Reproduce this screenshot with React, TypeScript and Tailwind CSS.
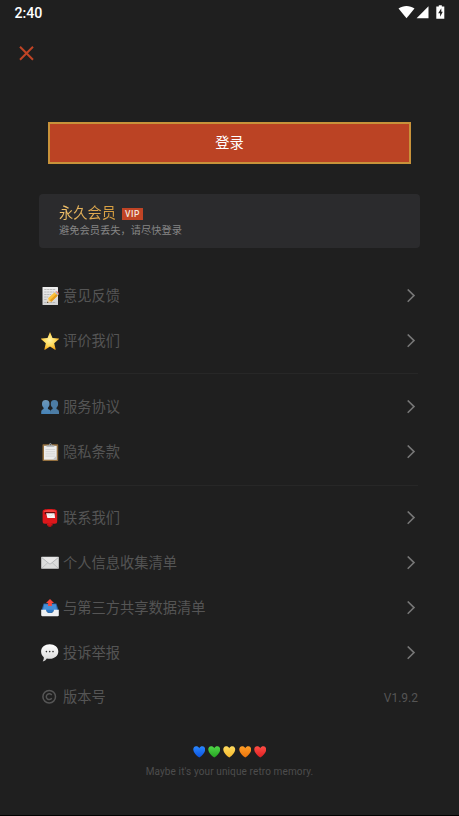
import type { ReactNode } from "react";

const MemoIcon = () => (
  <svg className="w-[18px] h-[18px]" viewBox="0 0 18 18">
    <defs>
      <linearGradient id="paper" x1="0" y1="0" x2="0" y2="1">
        <stop offset="0" stopColor="#efefef" />
        <stop offset="1" stopColor="#d2d2d2" />
      </linearGradient>
    </defs>
    <rect x="1.5" y="0" width="15.5" height="18" rx="0.5" fill="url(#paper)" />
    <path
      d="M3.2 2.5h11M3.2 5h10M3.2 7.5h7M3.2 10h4M3.2 12.5h2.500M3.200 15.500h11"
      stroke="#a8a8a8"
      strokeWidth="0.7"
      strokeDasharray="2.4 0.5"
    />
    <path d="M6 16l1.100-4.700 3.400 3.400z" fill="#f2d3a0" />
    <path d="M7.100 11.300L13.600 5.300l3.200 3.200-6.300 6.200-2.200-.9z" fill="#fbc13a" />
    <path d="M8.900 13.200l6.600-6.300 1.300 1.600-6.300 6.200z" fill="#e39a1c" />
    <path d="M13.600 5.300l1-.9 3.100 3.100-.9 1z" fill="#b9bfc4" />
    <path d="M14.600 4.400c1.300-1 4.100 1.500 3.100 3.100z" fill="#ea7770" />
    <path d="M6 16l.4-1.500 1.100 1.100z" fill="#3b3024" />
  </svg>
);

const StarIcon = () => (
  <svg className="w-[18px] h-[18px]" viewBox="0 0 18 18">
    <defs>
      <radialGradient id="star" cx="0.48" cy="0.45" r="0.55">
        <stop offset="0" stopColor="#fff3a8" />
        <stop offset="0.55" stopColor="#ffdb5c" />
        <stop offset="1" stopColor="#f6a81c" />
      </radialGradient>
    </defs>
    <path
      d="M9 0l2.500 5.900 6.100.5c.5.100.6.500.2.800l-4.600 4.100 1.400 6c.1.400-.2.600-.6.400L9 14.500l-5 3.200c-.4.200-.7 0-.6-.4l1.400-6L.2 7.200c-.4-.3-.3-.7.200-.8l6.100-.5z"
      fill="url(#star)"
    />
  </svg>
);

const PeopleIcon = () => (
  <svg className="w-[18px] h-[18px]" viewBox="0 0 18 18">
    <defs>
      <linearGradient id="people" x1="0" y1="0" x2="0" y2="1">
        <stop offset="0" stopColor="#6d97b8" />
        <stop offset="1" stopColor="#4683b8" />
      </linearGradient>
    </defs>
    <path
      d="M13.400 2c2.600 0 4 1.600 3.700 4.200-.1 1.700-.8 2.700-1.600 3.500v1.300c1.700.6 2.500 1.300 2.500 3V16H9.200v-2c0-1.700 1-2.400 2.400-3V9.700C10.500 8.900 9.900 7.900 9.800 6.200 9.600 3.600 10.900 2 13.400 2z"
      fill="#4c7ca4"
    />
    <path
      d="M4.700 2c2.600 0 4 1.600 3.800 4.200-.1 1.700-.7 2.700-1.600 3.500V11c1.700.6 2.700 1.300 2.700 3v2H.2v-2c0-1.700 1-2.400 2.400-3V9.700C1.700 8.900 1.100 7.900 1 6.200.8 3.600 2.200 2 4.700 2z"
      fill="url(#people)"
    />
  </svg>
);

const ClipboardIcon = () => (
  <svg className="w-[18px] h-[18px]" viewBox="0 0 18 18">
    <rect x="1.500" y="1.300" width="15.700" height="16.700" rx="0.800" fill="#94703f" />
    <rect x="3" y="2.800" width="12.700" height="13.900" fill="#ececec" />
    <path d="M4.500 6.500h9.600M4.500 8.700h9.600M4.500 10.900h9.600M4.500 13.100h9.600" stroke="#cfcfcf" strokeWidth="0.800" />
    <path d="M5.500 3.800V2.200h2.600C8.200.8 8.600.2 9.400.2s1.200.6 1.300 2h2.600v1.600z" fill="#a6aaad" />
    <circle cx="9.400" cy="1.600" r="0.600" fill="#444" />
    <path d="M11.500 16.700l4.200-3.900v3.900z" fill="#c4c4c4" />
  </svg>
);

const PostboxIcon = () => (
  <svg className="w-[18px] h-[18px]" viewBox="0 0 18 18">
    <rect x="7.300" y="13.500" width="3" height="4.400" fill="#b50f12" />
    <path d="M6 15.100h5.600v1.400H6z" fill="#d81519" />
    <path d="M1.600 3C1.600.7 3.100 0 8.900 0s7.300.7 7.300 3v9.300c0 1.700-.7 2.500-2.400 2.500H4c-1.700 0-2.400-.8-2.400-2.500z" fill="#dc171b" />
    <path d="M2.800 2.900c0-1.600 1.300-2 6.100-2s6.100.4 6.100 2z" fill="#f2403d" />
    <path d="M3.800 3.100h10.200v2.200H3.800z" fill="#5a0809" />
    <path d="M5.200 4.200h8.300l.6 4.900H6.400z" fill="#f6f4f4" />
    <path d="M5.400 4.400l4.300 2.700 3.700-2.700" fill="none" stroke="#ccc" strokeWidth="0.500" />
  </svg>
);

const EnvelopeIcon = () => (
  <svg className="w-[18px] h-[18px]" viewBox="0 0 18 18">
    <rect x="0.200" y="2.800" width="17.600" height="12" rx="0.800" fill="#dcdddd" />
    <path d="M.6 14.400l6.500-6M17.400 14.400l-6.500-6" stroke="#b4b6b8" strokeWidth="0.700" />
    <path d="M.4 3.300L8 9.500c.7.5 1.300.5 2 0l7.600-6.200" fill="#e9e9e9" stroke="#a9acae" strokeWidth="0.800" />
  </svg>
);

const OutboxIcon = () => (
  <svg className="w-[18px] h-[18px]" viewBox="0 0 18 18">
    <path d="M2.600 4.500h12.800l2.300 7.200H.3z" fill="#2764a6" />
    <path d="M3.200 5.200h11.600l1.500 6.500H1.700z" fill="#458fd8" />
    <path d="M.2 10.800h4.900c.5 2.200 1.600 3.200 3.900 3.200s3.400-1 3.900-3.200h4.900V16c0 .8-.3 1.200-1.100 1.200H1.300c-.8 0-1.100-.4-1.100-1.200z" fill="#eef0f2" />
    <path d="M5.100 10.800h7.800c-.5 2.200-1.600 3.200-3.900 3.200s-3.400-1-3.900-3.200z" fill="#2d77c4" />
    <path d="M9 0l4 3.900h-2.100v3H7.100v-3H5z" fill="#f5493f" />
  </svg>
);

const SpeechIcon = () => (
  <svg className="w-[18px] h-[18px]" viewBox="0 0 18 18">
    <defs>
      <linearGradient id="speech" x1="0" y1="0" x2="0" y2="1">
        <stop offset="0" stopColor="#ffffff" />
        <stop offset="1" stopColor="#d8d8d8" />
      </linearGradient>
    </defs>
    <path
      d="M8.700.3c4.900 0 8.600 2.900 8.600 7.200s-3.700 7.300-8.600 7.300c-1 0-2-.1-2.900-.4-.9 1.400-2.100 2.700-4.100 3 .8-1.100 1.200-2.500 1.100-4.200C1.100 11.800.1 9.800.1 7.500.1 3.200 3.800.3 8.700.3z"
      fill="url(#speech)"
    />
    <circle cx="5.400" cy="7.600" r="0.800" fill="#333" />
    <circle cx="8.700" cy="7.600" r="0.800" fill="#333" />
    <circle cx="12" cy="7.600" r="0.800" fill="#333" />
  </svg>
);

const CopyrightIcon = () => (
  <svg className="w-[18px] h-[18px]" viewBox="0 0 18 18" fill="none" stroke="#555">
    <circle cx="8.200" cy="8.700" r="6.300" strokeWidth="1.500" />
    <path d="M10.700 7.200a2.900 2.900 0 1 0 0 3" strokeWidth="1.500" />
  </svg>
);

const Chevron = () => (
  <svg className="w-[10px] h-[14px] mr-[2px]" viewBox="0 0 10 14" fill="none" stroke="#777" strokeWidth="1.600">
    <path d="M1.700 0.500L8 6.600l-6.300 6.100" />
  </svg>
);

const Heart = ({ id, light, dark }: { id: string; light: string; dark: string }) => (
  <svg className="w-[12.500px] h-[12px]" viewBox="0 0 12.5 12">
    <defs>
      <linearGradient id={id} x1="0" y1="0" x2="0" y2="1">
        <stop offset="0" stopColor={light} />
        <stop offset="1" stopColor={dark} />
      </linearGradient>
    </defs>
    <path
      d="M6.250 2.300C7 .7 8.300.2 9.500.3c1.800.2 2.900 1.600 2.700 3.600-.3 2.800-3 5.500-5.950 7.700C3.300 9.400.6 6.700.3 3.900.1 1.900 1.200.5 3 .3c1.200-.1 2.500.4 3.250 2z"
      fill={`url(#${id})`}
    />
  </svg>
);

const hearts = [
  { id: "blue", light: "#2a87ff", dark: "#0b52e0" },
  { id: "green", light: "#4fd747", dark: "#25a322" },
  { id: "yellow", light: "#ffdc60", dark: "#f6b72b" },
  { id: "orange", light: "#ff9d26", dark: "#e9720c" },
  { id: "red", light: "#ff4d45", dark: "#de1f22" },
];

type Item = { icon: ReactNode; label: string };

const groups: Item[][] = [
  [
    { icon: <MemoIcon />, label: "意见反馈" },
    { icon: <StarIcon />, label: "评价我们" },
  ],
  [
    { icon: <PeopleIcon />, label: "服务协议" },
    { icon: <ClipboardIcon />, label: "隐私条款" },
  ],
  [
    { icon: <PostboxIcon />, label: "联系我们" },
    { icon: <EnvelopeIcon />, label: "个人信息收集清单" },
    { icon: <OutboxIcon />, label: "与第三方共享数据清单" },
    { icon: <SpeechIcon />, label: "投诉举报" },
  ],
];

const Row = ({ icon, label, children }: Item & { children: ReactNode }) => (
  <div className="flex items-center h-[44.800px] pl-[1px]">
    {icon}
    <span className="ml-1 flex-1 text-[14.250px] leading-5 text-[#555]">{label}</span>
    {children}
  </div>
);

const StatusBar = () => (
  <div className="flex items-center justify-between h-[26px] pl-[14.500px] pr-[14.500px]">
    <span className="pt-px text-[14.200px] font-medium text-white">2:40</span>
    <div className="flex items-center h-[14px] -mt-[2px]">
      <svg className="w-[17px] h-[14px]" viewBox="0 0 17 14" fill="#fff">
        <path d="M.5 3.500C5 .1 12 .1 16.500 3.500L8.500 13.200z" />
      </svg>
      <svg className="w-[13px] h-[14px] ml-[1px]" viewBox="0 0 13 14" fill="#fff">
        <path d="M12.500 1.300v11.900H.6z" />
      </svg>
      <svg className="w-[9px] h-[14px] ml-[7px]" viewBox="0 0 9 14">
        <path d="M2.800.2h3v1.400h2.500v12.100H.3V1.600h2.500z" fill="#fff" />
        <path d="M5.300 3.300L2.200 8.200h1.900v3.500l2.700-4.900H5.300z" fill="#1f1f1f" />
      </svg>
    </div>
  </div>
);

const App = () => {
  return (
    <div className="flex flex-col w-[459px] h-[816px] overflow-hidden bg-[#1f1f1f] border-b border-black font-[Roboto,'Noto_Sans_CJK_SC',sans-serif]">
      <StatusBar />

      <button className="mt-5 ml-[19px] w-[15px] h-[15px]" aria-label="关闭">
        <svg className="w-[15px] h-[15px]" viewBox="0 0 15 15" stroke="#c04425" strokeWidth="2">
          <path d="M1 .7l13 13M14 .7L1 13.700" />
        </svg>
      </button>

      <button className="mt-[61px] mx-[48px] h-[42px] border-2 border-[#c8923a] bg-[#bb4324] pb-px text-[14.250px] leading-5 text-white">
        登录
      </button>

      <div className="mt-[30px] mx-[39px] h-[54px] shrink-0 rounded-[4px] bg-[#2b2b2d] pl-5 pt-[9px]">
        <div className="flex items-center h-5">
          <span className="text-[14.250px] leading-5 bg-linear-to-r from-[#f0c16c] to-[#d39a3c] bg-clip-text text-transparent">
            永久会员
          </span>
          <span className="ml-[6px] mt-[2px] w-[21px] h-3 bg-[#c04425] text-center text-[8.500px] leading-3 font-medium text-[#f3e3dc] tracking-[0.500px]">
            VIP
          </span>
        </div>
        <p className="text-[10.250px] leading-[15px] text-[#858585]">避免会员丢失，请尽快登录</p>
      </div>

      <div className="mt-[25.500px] ml-10 mr-[41px]">
        {groups.map((items, i) => (
          <div key={i}>
            {i > 0 && <div className="my-[10.300px] h-px bg-[#272727]" />}
            {items.map((item) => (
              <Row key={item.label} {...item}>
                <Chevron />
              </Row>
            ))}
          </div>
        ))}
        <Row icon={<CopyrightIcon />} label="版本号">
          <span className="pt-[2px] text-[12px] text-[#555]">V1.9.2</span>
        </Row>
      </div>

      <div className="mt-[26px] flex justify-center gap-[2.800px]">
        {hearts.map((heart) => (
          <Heart key={heart.id} {...heart} />
        ))}
      </div>
      <p className="mt-[7.500px] text-center text-[10px] leading-[14px] text-[#4d4d4d] tracking-[0.120px]">
        Maybe it's your unique retro memory.
      </p>
    </div>
  );
};

export default App;
